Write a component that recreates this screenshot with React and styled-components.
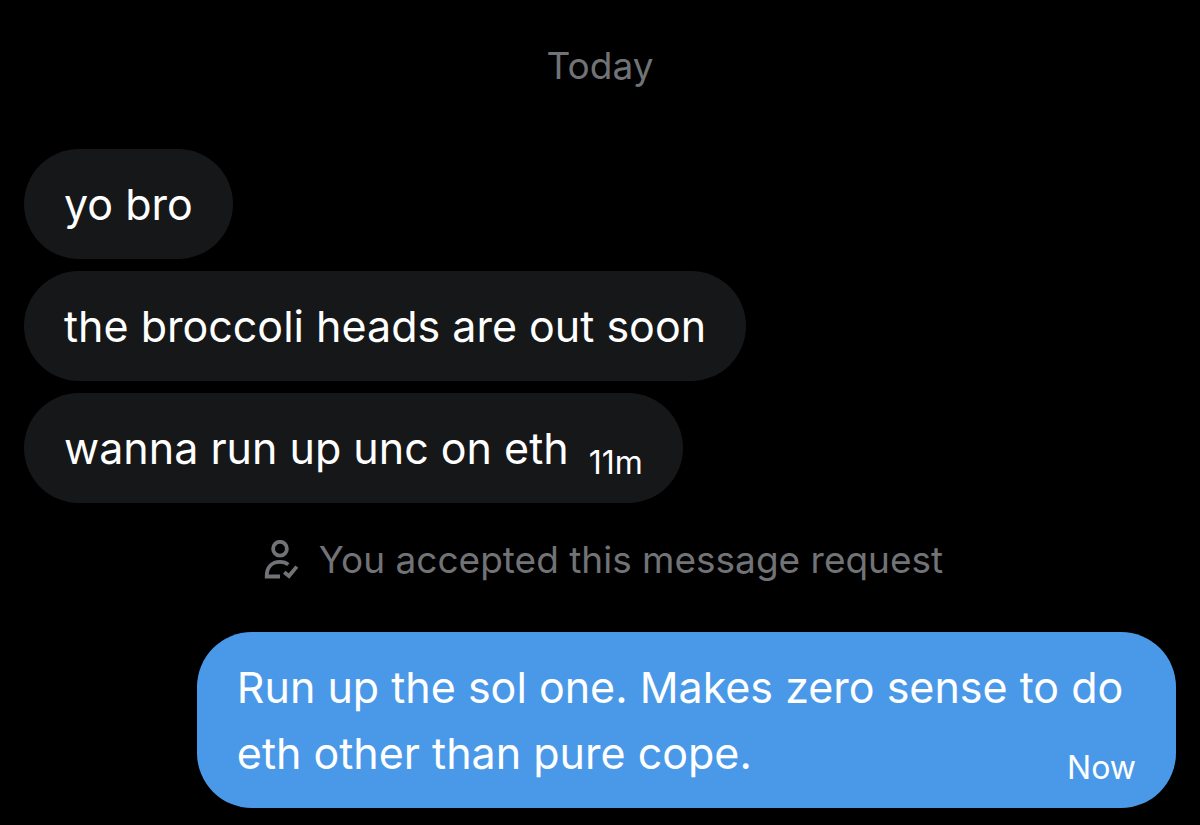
import React from "react";
import styled, { createGlobalStyle } from "styled-components";

const GlobalStyle = createGlobalStyle`
  * {
    box-sizing: border-box;
  }
  body {
    margin: 0;
    background-color: #000000;
    color: #ffffff;
    font-family: "Inter", "Roboto", sans-serif;
  }
`;

const Conversation = styled.main`
  min-height: 100vh;
  display: flex;
  flex-direction: column;
  padding: 42px 24px 16px;
`;

const DateLabel = styled.h2`
  margin: 0 0 59px;
  text-align: center;
  font-size: 37px;
  font-weight: 400;
  line-height: 48px;
  color: #717376;
`;

const MessageList = styled.ul`
  list-style: none;
  margin: 0;
  padding: 0;
  display: flex;
  flex-direction: column;
  align-items: ${({ $own }) => ($own ? "flex-end" : "flex-start")};
  gap: 12px;
`;

const Bubble = styled.li`
  max-width: 85%;
  padding: 22px 40px;
  border-radius: 55px;
  font-size: 43px;
  line-height: 66px;
  background-color: ${({ $own }) => ($own ? "#4a99e9" : "#161719")};
`;

// floated so that it shares the last line of the message
const Time = styled.time`
  float: right;
  margin: 30px 0 0 20px;
  font-size: 32px;
  line-height: 36px;
`;

const Notice = styled.p`
  margin: 33px 0 48px;
  padding-left: 6px;
  display: flex;
  justify-content: center;
  align-items: center;
  gap: 20px;
  font-size: 37px;
  line-height: 48px;
  color: #717376;
`;

const received = [
  { text: "yo bro" },
  { text: "the broccoli heads are out soon" },
  { text: "wanna run up unc on eth", time: "11m" },
];

const sent = [
  {
    text: "Run up the sol one. Makes zero sense to do eth other than pure cope.",
    time: "Now",
  },
];

const AcceptedIcon = () => (
  <svg width="36" height="40" viewBox="0 0 36 40" fill="none" aria-hidden="true">
    <g stroke="currentColor" strokeWidth="3.8">
      <circle cx="17" cy="8.7" r="6.9" />
      <path d="M17 36.5H3.7C3.7 27 9 21.8 17 21.8C20.5 21.8 23 22.7 25.3 24.6" />
      <path d="M21.2 32.2L26 36L33.8 26.6" />
    </g>
  </svg>
);

const Messages = ({ items, own }) => (
  <MessageList $own={own}>
    {items.map(({ text, time }) => (
      <Bubble key={text} $own={own}>
        {text}
        {time && <Time>{time}</Time>}
      </Bubble>
    ))}
  </MessageList>
);

const App = () => (
  <>
    <GlobalStyle />
    <Conversation>
      <DateLabel>Today</DateLabel>
      <Messages items={received} />
      <Notice>
        <AcceptedIcon />
        You accepted this message request
      </Notice>
      <Messages items={sent} own />
    </Conversation>
  </>
);

export default App;
